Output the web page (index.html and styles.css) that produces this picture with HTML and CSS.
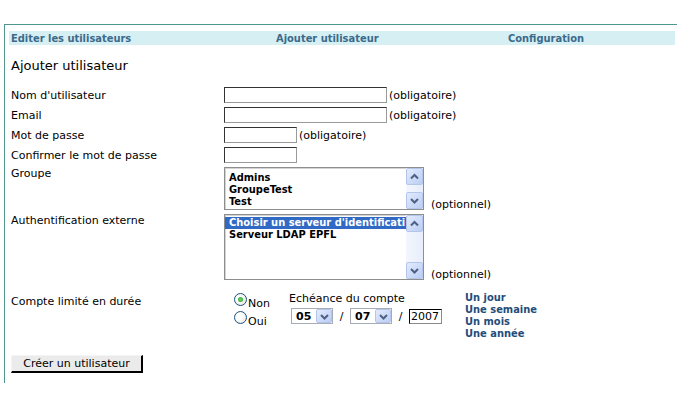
FILE: index.html
```html
<!DOCTYPE html>
<html lang="fr">
<head>
<meta charset="utf-8">
<title>Ajouter utilisateur</title>
<link rel="stylesheet" href="styles.css">
</head>
<body>
<div class="page">
  <nav class="tabs">
    <a class="tab" href="#">Editer les utilisateurs</a>
    <a class="tab" href="#">Ajouter utilisateur</a>
    <a class="tab" href="#">Configuration</a>
  </nav>
  <h1 class="title">Ajouter utilisateur</h1>
  <div class="form">
    <div class="label mid">Nom d'utilisateur</div>
    <div class="field"><span class="input wide"></span><span class="note">(obligatoire)</span></div>

    <div class="label mid">Email</div>
    <div class="field"><span class="input wide"></span><span class="note">(obligatoire)</span></div>

    <div class="label mid">Mot de passe</div>
    <div class="field"><span class="input short"></span><span class="note">(obligatoire)</span></div>

    <div class="label mid">Confirmer le mot de passe</div>
    <div class="field"><span class="input short"></span></div>

    <div class="label">Groupe</div>
    <div class="field bottom">
      <div class="listbox group">
        <div class="options">
          <div class="option">Admins</div>
          <div class="option">GroupeTest</div>
          <div class="option">Test</div>
        </div>
        <div class="scroll">
          <span class="sbtn"><svg width="11" height="11" viewBox="0 0 11 11"><path d="M2 7.5 L5.5 4 L9 7.5" fill="none" stroke="#4d6185" stroke-width="2"/></svg></span>
          <span class="strack"></span>
          <span class="sbtn"><svg width="11" height="11" viewBox="0 0 11 11"><path d="M2 4 L5.5 7.5 L9 4" fill="none" stroke="#4d6185" stroke-width="2"/></svg></span>
        </div>
      </div>
      <span class="note opt">(optionnel)</span>
    </div>

    <div class="label">Authentification externe</div>
    <div class="field bottom">
      <div class="listbox auth">
        <div class="options">
          <div class="option selected">Choisir un serveur d'identificati</div>
          <div class="option">Serveur LDAP EPFL</div>
        </div>
        <div class="scroll">
          <span class="sbtn"><svg width="11" height="11" viewBox="0 0 11 11"><path d="M2 7.5 L5.5 4 L9 7.5" fill="none" stroke="#4d6185" stroke-width="2"/></svg></span>
          <span class="strack"></span>
          <span class="sbtn"><svg width="11" height="11" viewBox="0 0 11 11"><path d="M2 4 L5.5 7.5 L9 4" fill="none" stroke="#4d6185" stroke-width="2"/></svg></span>
        </div>
      </div>
      <span class="note opt">(optionnel)</span>
    </div>

    <div class="label duree">Compte limité en durée</div>
    <div class="field duree-field">
      <div class="radios">
        <div class="radio-line"><span class="radio checked"></span><span class="rtext">Non</span></div>
        <div class="radio-line"><span class="radio"></span><span class="rtext">Oui</span></div>
      </div>
      <div class="echeance">
        <div class="ech-label">Echéance du compte</div>
        <div class="date">
          <span class="dd"><span class="ddval">05</span><span class="ddbtn"><svg width="11" height="11" viewBox="0 0 11 11"><path d="M2 4 L5.5 7.5 L9 4" fill="none" stroke="#4d6185" stroke-width="2"/></svg></span></span>
          <span class="slash">/</span>
          <span class="dd"><span class="ddval">07</span><span class="ddbtn"><svg width="11" height="11" viewBox="0 0 11 11"><path d="M2 4 L5.5 7.5 L9 4" fill="none" stroke="#4d6185" stroke-width="2"/></svg></span></span>
          <span class="slash">/</span>
          <span class="year">2007</span>
        </div>
      </div>
      <div class="quick">
        <a class="qlink" href="#">Un jour</a>
        <a class="qlink" href="#">Une semaine</a>
        <a class="qlink" href="#">Un mois</a>
        <a class="qlink" href="#">Une année</a>
      </div>
    </div>
  </div>
  <div class="actions"><button class="btn" type="button">Créer un utilisateur</button></div>
</div>
</body>
</html>
```
FILE: styles.css
```css
html, body {
  margin: 0;
  padding: 0;
  background: #fff;
}
body {
  font-family: "DejaVu Sans", Verdana, sans-serif;
  font-size: 11px;
  line-height: 13px;
  color: #000;
}
.page {
  box-sizing: border-box;
  margin: 24px 0 0 4px;
  width: 673px;
  height: 359px;
  border-top: 1px solid #4f968f;
  border-left: 1px solid #4f968f;
  padding: 6px 2px 0 4px;
}
.tabs {
  display: grid;
  grid-template-columns: 265px 232px 1fr;
  height: 14px;
  background: #d5eff2;
}
.tab {
  padding-left: 2px;
  font-weight: bold;
  font-stretch: condensed;
  line-height: 15px;
  color: #3b6a8c;
  text-decoration: none;
}
.title {
  margin: 13px 0 0 2px;
  font-size: 13px;
  font-weight: normal;
  line-height: 16px;
}
.form {
  display: grid;
  grid-template-columns: 215px 1fr;
  row-gap: 4px;
  margin-top: 13px;
}
.label {
  padding-left: 2px;
  align-self: start;
}
.label.mid {
  align-self: center;
}
.field {
  display: flex;
  align-items: center;
}
.field.bottom {
  align-items: flex-end;
}
.input {
  box-sizing: border-box;
  height: 16px;
  background: #fff;
  border: 1px solid;
  border-color: #333 #9a9a9a #9a9a9a #333;
}
.input.wide { width: 163px; }
.input.short { width: 73px; }
.note {
  margin-left: 2px;
}
.note.opt {
  margin-left: 7px;
  margin-bottom: -1px;
}
.listbox {
  box-sizing: border-box;
  width: 200px;
  display: flex;
  border: 1px solid #8e8e8e;
  box-shadow: inset 1px 1px 0 #d4d4d4;
  background: #fff;
}
.listbox.group { height: 43px; }
.listbox.auth { height: 66px; }
.options {
  flex: 1;
  min-width: 0;
  font-weight: bold;
  font-stretch: condensed;
}
.group .options { padding-top: 4px; }
.auth .options { padding-top: 2px; }
.option {
  padding-left: 4px;
  line-height: 12px;
  white-space: nowrap;
}
.option.selected {
  background: #316ac5;
  color: #fff;
}
.scroll {
  width: 17px;
  display: flex;
  flex-direction: column;
  background: linear-gradient(to right, #f3f6fd, #e6edfb);
}
.sbtn {
  box-sizing: border-box;
  width: 17px;
  height: 17px;
  display: flex;
  align-items: center;
  justify-content: center;
  border: 1px solid #b4c6ea;
  border-radius: 2px;
  background: linear-gradient(to bottom right, #e2ebfe, #bccdf5);
}
.strack { flex: 1; }
.duree {
  padding-top: 11px;
}
.duree-field {
  align-items: flex-start;
  padding-top: 8px;
}
.radios {
  width: 55px;
  margin-left: 10px;
  margin-top: 1px;
}
.radio-line {
  display: flex;
  align-items: flex-start;
  height: 18px;
}
.radio {
  box-sizing: border-box;
  width: 13px;
  height: 13px;
  border-radius: 50%;
  border: 1px solid #1c5180;
  background: radial-gradient(circle at 40% 40%, #fff 30%, #dcdcd4 100%);
  position: relative;
}
.radio.checked::after {
  content: "";
  position: absolute;
  left: 3px;
  top: 3px;
  width: 5px;
  height: 5px;
  border-radius: 50%;
  background: radial-gradient(circle, #6fd36a 0%, #21a121 100%);
}
.rtext {
  margin-top: 4px;
  margin-left: 1px;
}
.echeance {
  width: 176px;
}
.date {
  display: flex;
  align-items: center;
  margin-top: 3px;
  margin-left: 2px;
}
.dd {
  box-sizing: border-box;
  display: flex;
  align-items: center;
  width: 42px;
  height: 16px;
  border: 1px solid #a5acb5;
  background: #fff;
  font-weight: bold;
}
.ddval {
  flex: 1;
  padding-left: 4px;
}
.ddbtn {
  box-sizing: border-box;
  width: 16px;
  height: 14px;
  display: flex;
  align-items: center;
  justify-content: center;
  border: 1px solid #b4c6ea;
  border-radius: 2px;
  background: linear-gradient(to bottom right, #e2ebfe, #bccdf5);
}
.slash {
  width: 17px;
  text-align: center;
}
.year {
  box-sizing: border-box;
  width: 33px;
  height: 15px;
  line-height: 13px;
  padding-left: 1px;
  border: 1px solid;
  border-color: #000 #8a8a8a #8a8a8a #000;
}
.quick {
  display: flex;
  flex-direction: column;
}
.qlink {
  font-weight: bold;
  font-stretch: condensed;
  line-height: 12px;
  color: #234d7a;
  text-decoration: none;
}
.actions {
  margin-top: 15px;
  padding-left: 2px;
}
.btn {
  box-sizing: border-box;
  width: 132px;
  height: 18px;
  margin: 0;
  padding: 0;
  font-family: "DejaVu Sans", Verdana, sans-serif;
  font-size: 11px;
  line-height: 14px;
  color: #000;
  background: #ebebeb;
  border: 1px solid;
  border-right-width: 2px;
  border-bottom-width: 2px;
  border-color: #f4f4f4 #000 #000 #f4f4f4;
}
```
